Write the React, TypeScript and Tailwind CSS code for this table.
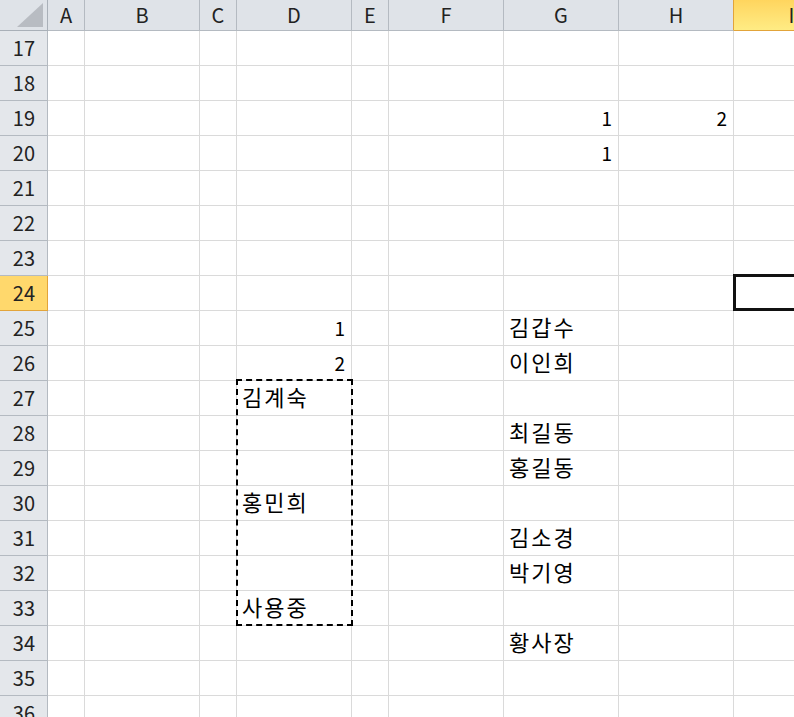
import React from 'react';

const cols = [
  { key: 'A', w: 'w-[37px]' },
  { key: 'B', w: 'w-[115px]' },
  { key: 'C', w: 'w-[37px]' },
  { key: 'D', w: 'w-[115px]' },
  { key: 'E', w: 'w-[37px]' },
  { key: 'F', w: 'w-[115px]' },
  { key: 'G', w: 'w-[115px]' },
  { key: 'H', w: 'w-[115px]' },
  { key: 'I', w: 'w-[115px]' },
];

const data: Record<string, string | number> = {
  G19: 1,
  H19: 2,
  G20: 1,
  D25: 1,
  D26: 2,
  G25: '김갑수',
  G26: '이인희',
  D27: '김계숙',
  G28: '최길동',
  G29: '홍길동',
  D30: '홍민희',
  G31: '김소경',
  G32: '박기영',
  D33: '사용중',
  G34: '황사장',
};

const rows = Array.from({ length: 20 }, (_, i) => 17 + i);

export default function App() {
  return (
    <div
      className="relative w-[794px] h-[717px] overflow-hidden bg-white text-[#222]"
      style={{ fontFamily: '"Noto Sans CJK KR", "Noto Sans", sans-serif' }}
    >
      {/* column headers */}
      <div className="flex h-[31px]">
        <div className="w-[48px] shrink-0 bg-[#dfe3e8] border-r border-b border-[#a9b0b8] relative">
          <svg className="absolute left-[17px] top-[3px]" width="26" height="24" viewBox="0 0 26 24">
            <polygon points="26,0 26,24 0,24" fill="#b8bcc2" />
          </svg>
        </div>
        {cols.map((c) =>
          c.key === 'I' ? (
            <div
              key={c.key}
              className={`${c.w} shrink-0 flex items-center justify-center text-[20px] bg-gradient-to-b from-[#ffd55e] to-[#ffec84] border-b border-[#e2a43a]`}
            >
              {c.key}
            </div>
          ) : (
            <div
              key={c.key}
              className={`${c.w} shrink-0 flex items-center justify-center text-[20px] bg-[#dfe3e8] border-r border-b border-[#b4bac1] ${
                c.key === 'H' ? 'border-r-[#e2a43a]' : ''
              }`}
            >
              {c.key}
            </div>
          )
        )}
      </div>

      {rows.map((r) => {
        const active = r === 24;
        return (
          <div key={r} className="flex h-[35px]">
            <div
              className={
                active
                  ? 'w-[48px] shrink-0 flex items-center justify-end pr-[12px] text-[20px] bg-[#ffd86c] border-r border-b border-[#e2a43a]'
                  : 'w-[48px] shrink-0 flex items-center justify-end pr-[12px] text-[20px] bg-[#e4e7eb] border-r border-b border-[#b4bac1]'
              }
            >
              {r}
            </div>
            {cols.map((c) => {
              const v = data[`${c.key}${r}`];
              const isNum = typeof v === 'number';
              return (
                <div
                  key={c.key}
                  className={`${c.w} shrink-0 border-r border-b border-[#dadada] flex items-center text-black ${
                    isNum
                      ? 'justify-end pr-[6px] text-[19px]'
                      : 'justify-start pl-[5px] pb-[3px] text-[22px] tracking-[2px]'
                  }`}
                >
                  {v}
                </div>
              );
            })}
          </div>
        );
      })}

      {/* active cell I24 */}
      <div className="absolute left-[733px] top-[274px] w-[80px] h-[37px] border-[3px] border-[#111]" />

      {/* copy marquee D27:D33 */}
      <div className="absolute left-[236px] top-[379px] w-[117px] h-[247px] border-2 border-dashed border-black" />
    </div>
  );
}
